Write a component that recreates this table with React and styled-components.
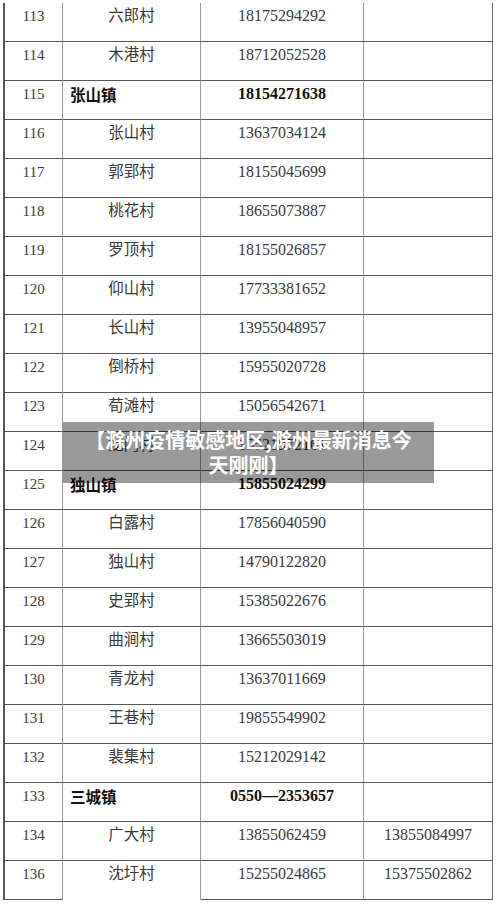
import React from 'react';
import styled, { createGlobalStyle } from 'styled-components';

const rows = [
  { no: '113', name: '六郎村', phone: '18175294292' },
  { no: '114', name: '木港村', phone: '18712052528' },
  { no: '115', name: '张山镇', phone: '18154271638', town: true },
  { no: '116', name: '张山村', phone: '13637034124' },
  { no: '117', name: '郭郢村', phone: '18155045699' },
  { no: '118', name: '桃花村', phone: '18655073887' },
  { no: '119', name: '罗顶村', phone: '18155026857' },
  { no: '120', name: '仰山村', phone: '17733381652' },
  { no: '121', name: '长山村', phone: '13955048957' },
  { no: '122', name: '倒桥村', phone: '15955020728' },
  { no: '123', name: '荀滩村', phone: '15056542671' },
  { no: '124', name: '龙门村', phone: '15521972161' },
  { no: '125', name: '独山镇', phone: '15855024299', town: true },
  { no: '126', name: '白露村', phone: '17856040590' },
  { no: '127', name: '独山村', phone: '14790122820' },
  { no: '128', name: '史郢村', phone: '15385022676' },
  { no: '129', name: '曲涧村', phone: '13665503019' },
  { no: '130', name: '青龙村', phone: '13637011669' },
  { no: '131', name: '王巷村', phone: '19855549902' },
  { no: '132', name: '裴集村', phone: '15212029142' },
  { no: '133', name: '三城镇', phone: '0550—2353657', town: true },
  { no: '134', name: '广大村', phone: '13855062459', phone2: '13855084997' },
  { no: '136', name: '沈圩村', phone: '15255024865', phone2: '15375502862' }
];

function App() {
  return (
    <>
      <GlobalStyle />
      <Page>
        <Table>
          {rows.map((row, i) => {
            const last = i === rows.length - 1;
            return (
              <Row key={row.no}>
                <Cell>{row.no}</Cell>
                <Cell $left={row.town} $bold={row.town} $cjk $noBottom={last}>
                  {row.name}
                </Cell>
                <Cell $bold={row.town}>{row.phone}</Cell>
                <Cell>{row.phone2 || ''}</Cell>
              </Row>
            );
          })}
        </Table>
        <Caption>【滁州疫情敏感地区,滁州最新消息今天刚刚】</Caption>
      </Page>
    </>
  );
}

const GlobalStyle = createGlobalStyle`
  html, body {
    margin: 0;
    padding: 0;
    background: #fff;
  }
`;

const Page = styled.div`
  position: relative;
  width: 500px;
  height: 907px;
  padding: 3px 0 0 3px;
  box-sizing: border-box;
  overflow: hidden;
`;

// 표
const Table = styled.div`
  display: flex;
  flex-direction: column;
  border-left: 2px solid #555;
  width: 490px;
  box-sizing: border-box;
`;

const Row = styled.div`
  display: grid;
  grid-template-columns: 58px 138px 163px 129px;
  height: 39px;
`;

const Cell = styled.div`
  box-sizing: border-box;
  border-right: 1px solid #999;
  border-bottom: 1px solid ${(p) => (p.$noBottom ? 'transparent' : '#555')};
  padding: 3px ${(p) => (p.$left ? '0 0 7px' : '0')};
  text-align: ${(p) => (p.$left ? 'left' : 'center')};
  font-family: ${(p) =>
    p.$cjk && p.$bold
      ? '"Noto Sans CJK SC", sans-serif'
      : '"Liberation Serif", "Noto Sans CJK SC", serif'};
  font-size: ${(p) => (p.$cjk ? '15.5px' : '16px')};
  font-weight: ${(p) => (p.$bold ? 700 : 400)};
  color: ${(p) => (p.$bold ? '#111' : '#3a3a3a')};
  line-height: 20px;
  white-space: nowrap;

  &:first-child {
    font-size: 15px;
  }

  &:last-child {
    border-right-color: #666;
  }
`;

// 제목 오버레이
const Caption = styled.div`
  position: absolute;
  left: 63px;
  top: 422px;
  width: 371px;
  height: 61px;
  box-sizing: border-box;
  padding: 5px 16px;
  background: rgba(0, 0, 0, 0.4);
  color: #fff;
  font-family: "Noto Sans CJK SC", sans-serif;
  font-size: 20px;
  font-weight: 700;
  line-height: 25px;
  text-align: center;
`;

export default App;
